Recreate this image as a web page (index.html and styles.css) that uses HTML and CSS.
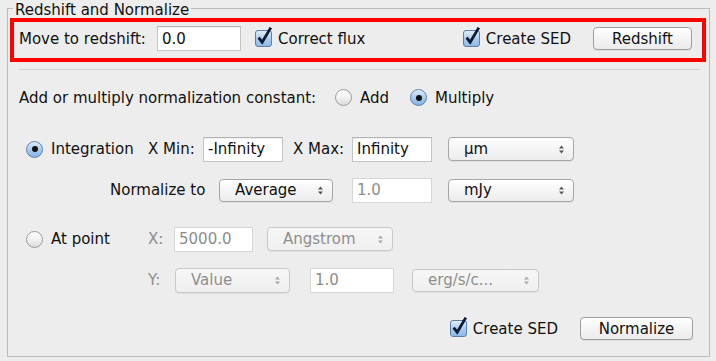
FILE: index.html
```html
<!DOCTYPE html>
<html>
<head>
<meta charset="utf-8">
<link rel="stylesheet" href="styles.css">
</head>
<body>
<div class="frame">
  <div class="frame-head"><span class="frame-title">Redshift and Normalize</span></div>
  <div class="frame-body">
    <div class="row row-redshift">
      <span class="lbl w-move">Move to redshift:</span>
      <span class="field w84">0.0</span>
      <span class="check-opt ml14">
        <span class="check"><svg class="tick" width="19" height="21" viewBox="0 0 19 21"><path d="M3.6 11.6 L7.2 16.2 L15.8 1.6" fill="none" stroke="#0d1b33" stroke-width="2.8"/></svg></span>
        <span>Correct flux</span>
      </span>
      <span class="check-opt push">
        <span class="check"><svg class="tick" width="19" height="21" viewBox="0 0 19 21"><path d="M3.6 11.6 L7.2 16.2 L15.8 1.6" fill="none" stroke="#0d1b33" stroke-width="2.8"/></svg></span>
        <span>Create SED</span>
      </span>
      <span class="button w99 ml22">Redshift</span>
    </div>

    <div class="separator"></div>

    <div class="row row-mode">
      <span class="lbl w-mode">Add or multiply normalization constant:</span>
      <span class="radio-opt w75"><span class="radio"></span><span>Add</span></span>
      <span class="radio-opt"><span class="radio on"><span class="dot"></span></span><span>Multiply</span></span>
    </div>

    <div class="row row-integ">
      <span class="radio on"><span class="dot"></span></span>
      <span class="lbl w97 ml8">Integration</span>
      <span class="lbl w55">X Min:</span>
      <span class="field w80 h26">-Infinity</span>
      <span class="lbl w59 ml10">X Max:</span>
      <span class="field w80 h26">Infinity</span>
      <span class="select w126 h24 ml16"><span class="sel-text">µm</span><svg class="arr" width="7" height="11" viewBox="0 0 7 11"><path d="M3.5 1.5 L6 4.5 H1 Z M1 6.5 H6 L3.5 9.5 Z"/></svg></span>
    </div>

    <div class="row row-norm">
      <span class="lbl w109">Normalize to</span>
      <span class="select w114 h23"><span class="sel-text">Average</span><svg class="arr" width="7" height="11" viewBox="0 0 7 11"><path d="M3.5 1.5 L6 4.5 H1 Z M1 6.5 H6 L3.5 9.5 Z"/></svg></span>
      <span class="field w80 h26 ml19 dim">1.0</span>
      <span class="select w126 h23 ml16"><span class="sel-text">mJy</span><svg class="arr" width="7" height="11" viewBox="0 0 7 11"><path d="M3.5 1.5 L6 4.5 H1 Z M1 6.5 H6 L3.5 9.5 Z"/></svg></span>
    </div>

    <div class="row row-point">
      <span class="radio"></span>
      <span class="lbl w97 ml8">At point</span>
      <span class="lbl w26 dim-text">X:</span>
      <span class="field w79 h26 dim">5000.0</span>
      <span class="select w126 h24 ml14 disabled"><span class="sel-text">Angstrom</span><svg class="arr" width="7" height="11" viewBox="0 0 7 11"><path d="M3.5 1.5 L6 4.5 H1 Z M1 6.5 H6 L3.5 9.5 Z"/></svg></span>
    </div>

    <div class="row row-y">
      <span class="lbl w27 dim-text">Y:</span>
      <span class="select w115 h25 disabled"><span class="sel-text">Value</span><svg class="arr" width="7" height="11" viewBox="0 0 7 11"><path d="M3.5 1.5 L6 4.5 H1 Z M1 6.5 H6 L3.5 9.5 Z"/></svg></span>
      <span class="field w84 h26 ml20 dim">1.0</span>
      <span class="select w127 h23 ml18 disabled"><span class="sel-text">erg/s/c...</span><svg class="arr" width="7" height="11" viewBox="0 0 7 11"><path d="M3.5 1.5 L6 4.5 H1 Z M1 6.5 H6 L3.5 9.5 Z"/></svg></span>
    </div>

    <div class="row row-bottom">
      <span class="check-opt">
        <span class="check"><svg class="tick" width="19" height="21" viewBox="0 0 19 21"><path d="M3.6 11.6 L7.2 16.2 L15.8 1.6" fill="none" stroke="#0d1b33" stroke-width="2.8"/></svg></span>
        <span>Create SED</span>
      </span>
      <span class="button w113 ml22">Normalize</span>
    </div>
  </div>
</div>
</body>
</html>
```

FILE: styles.css
```css
html, body {
  margin: 0;
  padding: 0;
  background: #ededed;
}

body {
  font-family: "DejaVu Sans", sans-serif;
  font-size: 15px;
  color: #111;
  width: 716px;
  height: 361px;
  overflow: hidden;
}

.frame {
  margin-left: 7px;
  width: 703px;
}

.frame-head {
  display: flex;
  height: 18px;
}

.frame-head::before {
  content: "";
  width: 5px;
  margin-top: 8px;
  border-top: 1px solid #bcbcbc;
  border-left: 1px solid #bcbcbc;
}

.frame-head::after {
  content: "";
  flex: 1;
  margin-top: 8px;
  border-top: 1px solid #bcbcbc;
  border-right: 1px solid #bcbcbc;
}

.frame-title {
  padding: 2px 2px 0 2px;
  line-height: 17px;
  margin-bottom: -1px;
  white-space: nowrap;
}

.frame-body {
  border: 1px solid #bcbcbc;
  border-top: none;
  padding-bottom: 16px;
}

.row {
  display: flex;
  align-items: center;
  white-space: nowrap;
}

.row-redshift {
  margin: 0 3px 0 2px;
  border: 4px solid #ff0000;
  padding: 4px 10px 7px 5px;
}

.separator {
  margin: 7px 9px 0 11px;
  border-top: 1px solid #d2d2d2;
}

.row-mode { margin-top: 16px; height: 23px; padding-left: 11px; }
.row-integ { margin-top: 27px; height: 26px; padding-left: 18px; }
.row-norm { margin-top: 15px; height: 26px; padding-left: 102px; }
.row-point { margin-top: 23px; height: 26px; padding-left: 18px; }
.row-y { margin-top: 15px; height: 26px; padding-left: 140px; }
.row-bottom { margin-top: 24px; height: 23px; justify-content: flex-end; padding-right: 16px; }

.lbl { display: inline-block; flex: none; }
.w-move { width: 138px; }
.w-mode { width: 316px; }
.w26 { width: 26px; }
.w27 { width: 27px; }
.w55 { width: 55px; }
.w59 { width: 59px; }
.w75 { width: 75px; }
.w79 { width: 79px; }
.w80 { width: 80px; }
.w84 { width: 84px; }
.w97 { width: 97px; }
.w99 { width: 99px; }
.w109 { width: 109px; }
.w113 { width: 113px; }
.w114 { width: 114px; }
.w115 { width: 115px; }
.w126 { width: 126px; }
.w127 { width: 127px; }
.h23 { height: 23px; }
.h24 { height: 24px; }
.h25 { height: 25px; }
.h26 { height: 26px; }
.ml8 { margin-left: 8px; }
.ml10 { margin-left: 10px; }
.ml14 { margin-left: 14px; }
.ml16 { margin-left: 16px; }
.ml18 { margin-left: 18px; }
.ml19 { margin-left: 19px; }
.ml20 { margin-left: 20px; }
.ml22 { margin-left: 22px; }
.push { margin-left: auto; }

.dim-text { color: #8c8c8c; }

/* text fields */
.field {
  box-sizing: border-box;
  flex: none;
  display: flex;
  align-items: center;
  height: 25px;
  padding-left: 4px;
  background: #fff;
  border: 1px solid #c4c4c4;
  border-top-color: #b2b2b2;
  box-shadow: inset 0 1px 1px rgba(0, 0, 0, 0.06);
}

.field.dim {
  color: #8c8c8c;
  border-color: #d6d6d6;
  box-shadow: none;
}

/* buttons */
.button {
  box-sizing: border-box;
  flex: none;
  display: flex;
  align-items: center;
  justify-content: center;
  height: 23px;
  background: linear-gradient(#ffffff, #f3f3f3 55%, #ececec);
  border: 1px solid #9e9e9e;
  border-radius: 4px;
  box-shadow: 0 1px 0 rgba(0, 0, 0, 0.06);
}

/* popup selects */
.select {
  box-sizing: border-box;
  flex: none;
  display: flex;
  align-items: center;
  padding: 0 8px 0 15px;
  background: linear-gradient(#ffffff, #f4f4f4 55%, #ececec);
  border: 1px solid #a6a6a6;
  border-radius: 4px;
  box-shadow: 0 1px 0 rgba(0, 0, 0, 0.05);
}

.sel-text { flex: 1; }
.arr { flex: none; fill: #555; }

.select.disabled {
  color: #8e8e8e;
  border-color: #c8c8c8;
  background: linear-gradient(#f7f7f7, #efefef);
}

.select.disabled .arr { fill: #a8a8a8; }

/* checkboxes */
.check-opt {
  display: flex;
  align-items: center;
  gap: 6px;
  flex: none;
}

.check {
  box-sizing: border-box;
  position: relative;
  display: inline-block;
  width: 17px;
  height: 17px;
  border: 1px solid #5c7fa8;
  border-radius: 3px;
  background: linear-gradient(#e1eefc, #a9cbef 55%, #8db9ea);
}

.tick {
  position: absolute;
  left: -1px;
  top: -5px;
}

/* radios */
.radio-opt {
  display: flex;
  align-items: center;
  gap: 8px;
  flex: none;
}

.radio {
  box-sizing: border-box;
  flex: none;
  display: inline-flex;
  align-items: center;
  justify-content: center;
  width: 17px;
  height: 17px;
  border-radius: 50%;
  border: 1px solid #9a9a9a;
  background: linear-gradient(#ffffff, #f2f2f2 50%, #dcdcdc);
}

.radio.on {
  border-color: #5d80ab;
  background: linear-gradient(#dbeafb, #a7c9ef 55%, #86b4e8);
}

.dot {
  width: 6px;
  height: 6px;
  border-radius: 50%;
  background: #111;
}
```
